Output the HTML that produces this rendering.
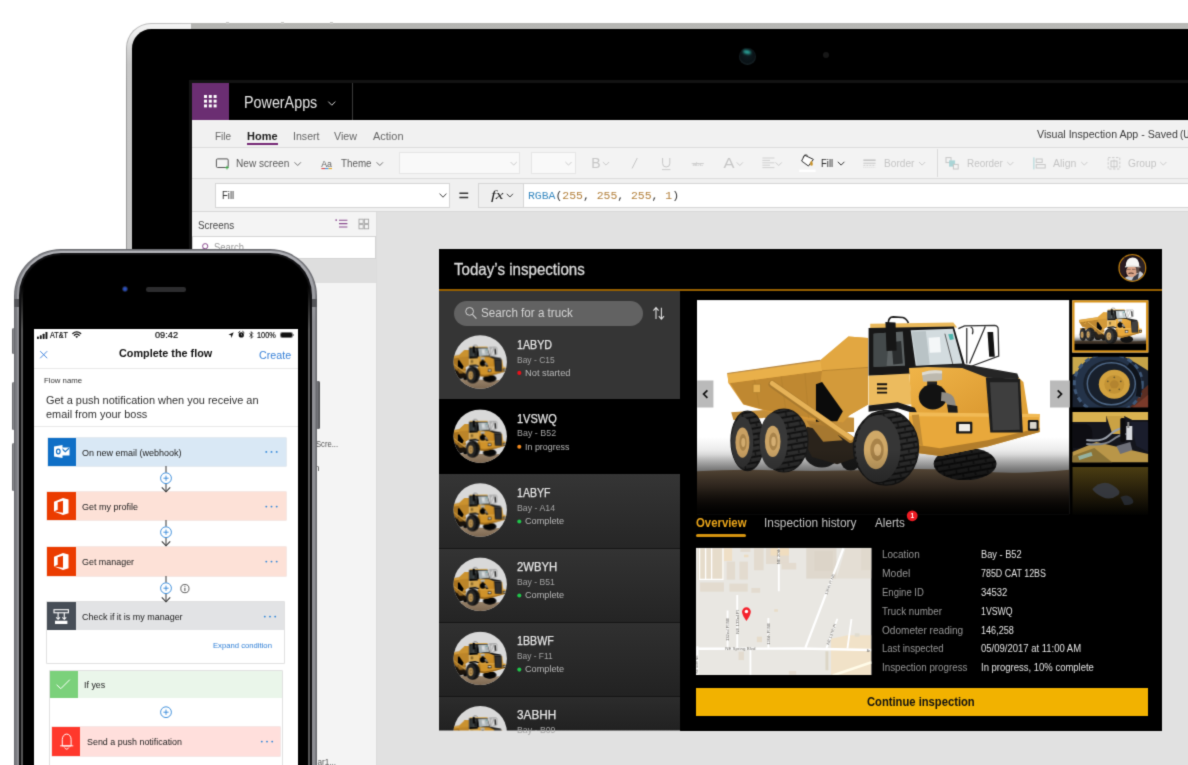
<!DOCTYPE html>
<html lang="en">
<head>
<meta charset="utf-8">
<title>PowerApps and Flow on tablet and phone</title>
<style>
html,body{margin:0;padding:0}
body{width:1188px;height:765px;overflow:hidden;background:#fff;position:relative;font-family:"Liberation Sans",sans-serif;}
#wrap{position:absolute;left:0;top:0;width:1400px;height:960px;background:#fff;filter:url(#soft)}
.a{position:absolute}
.t{position:absolute;white-space:nowrap;line-height:1;transform-origin:0 50%}
.mono{font-family:"Liberation Mono",monospace}
svg{position:absolute;overflow:visible}
svg svg{position:static;overflow:hidden}
</style>
</head>
<body>
<svg width="0" height="0" style="left:0;top:0"><filter id="soft" x="0" y="0" width="100%" height="100%" color-interpolation-filters="sRGB"><feConvolveMatrix order="3" kernelMatrix="0.0196 0.1008 0.0196 0.1008 0.5184 0.1008 0.0196 0.1008 0.0196" edgeMode="duplicate" preserveAlpha="true"/></filter></svg>
<div id="wrap">
<!-- ================= TABLET ================= -->
<div class="a" style="left:125.700px;top:23.100px;width:1100px;height:800px;border-radius:25px 0 0 0;background:linear-gradient(90deg,#a9a9a9 0,#b9b9b9 3px,#c4c4c4 65px,#b4b4b1 65.500px,#b9b9b6 100%)"></div>
<div class="a" style="left:126.500px;top:24px;width:64.500px;height:800px;border-radius:24.200px 0 0 0;background:linear-gradient(180deg,#f4f4f4 0,#ececec 10px,#d2d2d2 26px,#c6c6c6 40px,#c0c0c0 100%)"></div>
<div class="a" style="left:125.700px;top:50px;width:1.200px;height:760px;background:linear-gradient(180deg,rgba(140,140,140,0),#9a9a9a 40px)"></div>
<div class="a" style="left:226px;top:22px;width:3px;height:1.500px;background:#c9c9c7"></div><div class="a" style="left:280.500px;top:22px;width:3px;height:1.500px;background:#c9c9c7"></div><div class="a" style="left:330px;top:22px;width:3px;height:1.500px;background:#c9c9c7"></div>
<div class="a" style="left:131.500px;top:29px;width:1100px;height:800px;border-radius:19.500px 0 0 0;background:#000"></div>
<!-- camera -->
<div class="a" style="left:738.5px;top:47.5px;width:17px;height:17px;border-radius:50%;background:radial-gradient(circle at 50% 45%,#0d1a1f 0,#0a1216 55%,#1d2a2e 80%,#0a0d0e 100%)"></div>
<div class="a" style="left:743px;top:50px;width:8px;height:4px;border-radius:50%;background:#2aa198;filter:blur(.8px);transform:rotate(12deg)"></div>
<div class="a" style="left:822.5px;top:52px;width:6px;height:6px;border-radius:50%;background:#171717"></div>
<!-- screen border -->
<div class="a" style="left:189px;top:79.5px;width:1010px;height:700px;background:#131313"></div>
<!-- screen -->
<div class="a" style="left:192px;top:82.5px;width:1000px;height:690px;background:#e1e1e1"></div>
<!-- header -->
<div class="a" style="left:192px;top:82.5px;width:1000px;height:37px;background:#000"></div>
<div class="a" style="left:192px;top:82.5px;width:36.700px;height:37px;background:#6b2e72"></div>
<svg style="left:203.8px;top:94.8px" width="13" height="13" viewBox="0 0 13 13"><g fill="#fff"><rect x="0" y="0" width="3" height="3"/><rect x="4.8" y="0" width="3" height="3"/><rect x="9.6" y="0" width="3" height="3"/><rect x="0" y="4.7" width="3" height="3"/><rect x="4.8" y="4.7" width="3" height="3"/><rect x="9.6" y="4.7" width="3" height="3"/><rect x="0" y="9.4" width="3" height="3"/><rect x="4.8" y="9.4" width="3" height="3"/><rect x="9.6" y="9.4" width="3" height="3"/></g></svg>
<div class="a" style="left:351.500px;top:82.500px;width:1px;height:37px;background:#3a3a3a"></div>
<!-- ribbon -->
<div class="a" style="left:192px;top:119.500px;width:1000px;height:28px;background:#f1f1f1"></div>
<div class="a" style="left:192px;top:147px;width:1000px;height:1px;background:#dcdcdc"></div>
<div class="a" style="left:192px;top:148px;width:1000px;height:30px;background:#f3f3f3"></div>
<div class="a" style="left:192px;top:178px;width:1000px;height:1px;background:#dcdcdc"></div>
<div class="a" style="left:192px;top:179px;width:1000px;height:32px;background:#f0f0f0"></div>
<div class="a" style="left:192px;top:211px;width:1000px;height:1px;background:#d8d8d8"></div>
<!-- Home underline -->
<div class="a" style="left:247px;top:143px;width:30.5px;height:2px;background:#742774"></div>
<!-- toolbar dropdown boxes -->
<div class="a" style="left:398.5px;top:152px;width:121px;height:21.5px;background:#f9f9f9;border:1px solid #e6e6e6;box-sizing:border-box"></div>
<div class="a" style="left:530.5px;top:152px;width:45px;height:21.5px;background:#f9f9f9;border:1px solid #e6e6e6;box-sizing:border-box"></div>
<div class="a" style="left:936.5px;top:149px;width:1px;height:28px;background:#dadada"></div>
<!-- formula bar -->
<div class="a" style="left:214.5px;top:183px;width:235.5px;height:24.5px;background:#fff;border:1px solid #d6d6d6;box-sizing:border-box"></div>
<div class="a" style="left:478px;top:183px;width:720px;height:24.5px;background:#fff;border:1px solid #d6d6d6;box-sizing:border-box"></div>
<div class="a" style="left:479px;top:184px;width:45px;height:22.5px;background:#efefef;border-right:1px solid #d6d6d6;box-sizing:border-box"></div>
<!-- screens panel -->
<div class="a" style="left:192px;top:212px;width:184px;height:570px;background:#f4f4f4"></div>
<div class="a" style="left:192px;top:236px;width:184px;height:22.5px;background:#fff;border:1px solid #d4d4d4;box-sizing:border-box"></div>
<div class="a" style="left:192px;top:258.5px;width:184px;height:24.5px;background:#dedede"></div>
<div class="a" style="left:376px;top:212px;width:1px;height:570px;background:#dcdcdc"></div>
<!-- ================= SHARED SVG DEFS (truck illustration) ================= -->
<svg width="0" height="0" style="left:0;top:0">
<defs>
<linearGradient id="gSky" x1="0" y1="0" x2="0" y2="1"><stop offset="0" stop-color="#fff"/><stop offset=".64" stop-color="#fff"/><stop offset=".72" stop-color="#e4e4e4"/><stop offset=".80" stop-color="#8a8a8a"/></linearGradient>
<linearGradient id="gGround" x1="0" y1="0" x2="0" y2="1"><stop offset="0" stop-color="#64533f"/><stop offset=".3" stop-color="#4b3d30"/><stop offset=".75" stop-color="#221a13"/><stop offset="1" stop-color="#0a0806"/></linearGradient>
<linearGradient id="gBody" x1="0" y1="0" x2="0" y2="1"><stop offset="0" stop-color="#e8ae48"/><stop offset="1" stop-color="#d59535"/></linearGradient>
<linearGradient id="gHood" x1="0" y1="0" x2="1" y2="1"><stop offset="0" stop-color="#f0b549"/><stop offset="1" stop-color="#dc9a31"/></linearGradient>
<pattern id="pMesh" width="7" height="7" patternUnits="userSpaceOnUse"><rect width="7" height="7" fill="#4d4d4d"/><path d="M0 0L7 7M7 0L0 7" stroke="#2b2b2b" stroke-width="1.6"/></pattern>
<pattern id="pTread" width="44" height="40" patternUnits="userSpaceOnUse" patternTransform="rotate(-10)"><rect width="44" height="40" fill="#2e2e2e"/><path d="M0 6H44M0 26H44" stroke="#0f0f0f" stroke-width="7"/><path d="M22 6V26" stroke="#141414" stroke-width="5"/><path d="M0 26V46M44 26V46" stroke="#141414" stroke-width="5"/></pattern>
<symbol id="truckBody" viewBox="0 0 373 214.500" overflow="visible" preserveAspectRatio="none">
 <!-- left half drawn in 3.56x coords -->
 <g transform="scale(.2809)">
  <!-- far side tyres -->
  <ellipse cx="445" cy="545" rx="62" ry="52" fill="#1d1d1d"/><ellipse cx="430" cy="540" rx="20" ry="22" fill="#3a3126"/>
  <ellipse cx="548" cy="570" rx="36" ry="38" fill="#181818"/>
  <!-- frame -->
  <path d="M122 400L240 392L560 420L560 470L400 470L240 420L130 428Z" fill="#c48f3a"/>
  <path d="M390 430L470 440L540 500L430 500Z" fill="#b07d30"/>
  <path d="M392 452L470 470L560 500L575 560L500 585L410 560L380 500Z" fill="#2a231b"/>
  <path d="M400 440L475 452L520 500L450 505Z" fill="#a67830"/>
  <!-- dump body -->
  <path d="M108 262L440 215L540 130L610 135L610 372L545 410L520 436L390 426L250 396L165 372L112 296Z" fill="url(#gBody)"/>
  <path d="M118 296L446 252L432 424L250 394L166 371Z" fill="#bf8831"/>
  <path d="M446 252L610 240L610 372L545 410L520 436L432 424Z" fill="#d39a3a"/>
  <path d="M108 262L440 215L446 252L113 297Z" fill="#e9b04a"/>
  <path d="M440 215L540 130L610 135L610 240L446 252Z" fill="#e2a741"/>
  <path d="M108 262L440 215" stroke="#b98a45" stroke-width="4"/>
  <path d="M446 252L610 240M205 284L222 380M300 272L318 402M385 262L398 420" stroke="#b5822f" stroke-width="3" fill="none"/>
  <rect x="200" y="300" width="26" height="30" fill="#e3ad4d" stroke="#a87a2c" stroke-width="2"/>
  <!-- mudflap -->
  <path d="M424 300L446 292L520 396L500 432L424 434Z" fill="#0b0b0b"/>
  <!-- hoist cylinder -->
  <path d="M268 300L548 496" stroke="#a97a2e" stroke-width="26" stroke-linecap="round"/>
  <path d="M268 297L548 492" stroke="#e6b257" stroke-width="17" stroke-linecap="round"/>
  <!-- rear tyre 1 -->
  <ellipse cx="180" cy="502" rx="59" ry="106" fill="url(#pTread)"/>
  <ellipse cx="180" cy="502" rx="59" ry="106" fill="none" stroke="#1a1a1a" stroke-width="4"/>
  <ellipse cx="162" cy="506" rx="39" ry="90" fill="#353535"/>
  <ellipse cx="162" cy="508" rx="25" ry="54" fill="#c9a062"/><ellipse cx="164" cy="508" rx="13" ry="30" fill="#a8834a"/><ellipse cx="165" cy="508" rx="7" ry="16" fill="#d1ab6e"/>
  <!-- rear tyre 2 -->
  <ellipse cx="310" cy="501" rx="86" ry="112" fill="url(#pTread)"/>
  <ellipse cx="310" cy="501" rx="86" ry="112" fill="none" stroke="#1a1a1a" stroke-width="4"/>
  <ellipse cx="273" cy="503" rx="50" ry="100" fill="#383838"/>
  <ellipse cx="270" cy="504" rx="28" ry="56" fill="#cba466"/><ellipse cx="272" cy="504" rx="15" ry="32" fill="#a8834a"/><ellipse cx="273" cy="504" rx="8" ry="17" fill="#d4ae72"/>
 </g>
 <!-- right half drawn in 3.56x coords with origin x=173 -->
 <g transform="translate(173 0) scale(.2809)">
  <!-- far front-right tyre -->
  <ellipse cx="340" cy="584" rx="112" ry="58" fill="url(#pTread)"/><ellipse cx="340" cy="584" rx="112" ry="58" fill="#000" opacity=".35"/>
  <!-- cab roof -->
  <path d="M2 84L298 80L312 98L2 102Z" fill="#e9b85a"/>
  <!-- cab frame -->
  <path d="M-4 100L300 94L340 232L160 244L138 268L-4 270Z" fill="#171717"/>
  <path d="M14 120L118 112L126 234L14 238Z" fill="#5d6364"/>
  <path d="M14 120L70 116L60 236L14 238Z" fill="#444a4b"/>
  <path d="M78 150L112 146L118 226L84 230Z" fill="#2a2d2e"/>
  <path d="M146 108L296 102L330 226L164 234Z" fill="#d3dcdf"/>
  <path d="M210 134L250 132L254 186L214 188Z" fill="#f4f7f8"/>
  <path d="M150 112L200 110L214 230L168 232Z" fill="#b9c3c6"/>
  <path d="M280 122L296 120L300 140L286 142Z" fill="#4fb5ad"/>
  <path d="M268 120L296 228" stroke="#444" stroke-width="3"/>
  <!-- left mirror -->
  <path d="M66 84Q66 60 84 60L118 62Q132 66 138 82" fill="none" stroke="#1c1c1c" stroke-width="6"/>
  <path d="M56 78L92 80L96 180L60 182Z" fill="#161616"/>
  <!-- right mirror -->
  <path d="M316 102L338 92L446 90Q458 92 458 104L460 200L362 236M346 100L346 226M412 94L356 226M360 96Q372 100 366 122" fill="none" stroke="#2e2e2e" stroke-width="4.500"/>
  <path d="M420 114L440 114L446 202L426 202Z" fill="#121212"/>
  <!-- lower cab panel -->
  <path d="M-4 270L140 262L152 372L-4 374Z" fill="#ecbb5e"/>
  <path d="M26 300H62M26 315H62M26 330H62" stroke="#15130f" stroke-width="7"/>
  <!-- hood -->
  <path d="M140 242L330 232L424 272L428 408L150 402Z" fill="url(#gHood)"/>
  <path d="M174 238L336 228L526 262L534 282L420 277L330 242Z" fill="#262626"/>
  <path d="M530 276L548 292L566 408L538 408Z" fill="#e0a238"/>
  <!-- air cleaner -->
  <path d="M186 258Q222 246 258 252L258 284Q222 294 190 290Z" fill="#bdb9ae"/>
  <path d="M186 258Q222 246 258 252L258 262Q222 258 187 268Z" fill="#dedbd2"/>
  <path d="M205 290H240V306H205Z" fill="#222"/>
  <ellipse cx="225" cy="345" rx="50" ry="45" fill="#121212"/>
  <path d="M256 328Q300 330 304 360L312 402L282 402L276 372Q270 358 254 360Z" fill="#8f8b84"/>
  <path d="M276 372L312 378L314 402L280 402Z" fill="#1b1b1b"/>
  <!-- fender -->
  <path d="M-4 376L100 364L160 384L172 408L100 386L-4 398Z" fill="#1a1a1a"/>
  <!-- bumper -->
  <path d="M140 400L606 406L606 470L420 522L252 556L176 546L140 482Z" fill="#e8a83b"/>
  <path d="M140 400L606 406L606 418L140 414Z" fill="#f1ba55"/>
  <path d="M176 546L252 556L420 522L606 470L606 455L420 500L250 528L160 515Z" fill="#b27d2b"/>
  <path d="M150 410L175 408L190 520L165 510Z" fill="#c28c34"/>
  <rect x="308" y="434" width="58" height="42" rx="4" fill="#191919"/><rect x="318" y="442" width="40" height="26" rx="3" fill="#efece6"/>
  <rect x="564" y="428" width="38" height="38" rx="4" fill="#191919"/><rect x="571" y="435" width="24" height="24" rx="3" fill="#d9d5cc"/>
  <!-- grille -->
  <path d="M414 276L536 280L546 472L430 472Z" fill="#1f1f1f"/>
  <path d="M429 293L528 293L535 462L439 465Z" fill="url(#pMesh)"/>
  <!-- front tyre -->
  <ellipse cx="58" cy="527" rx="116" ry="133" fill="url(#pTread)"/>
  <ellipse cx="58" cy="527" rx="116" ry="133" fill="none" stroke="#181818" stroke-width="5"/>
  <ellipse cx="30" cy="530" rx="80" ry="120" fill="#363636"/>
  <ellipse cx="22" cy="534" rx="43" ry="69" fill="#cfa867"/><ellipse cx="26" cy="534" rx="24" ry="40" fill="#a98349"/><ellipse cx="28" cy="534" rx="13" ry="22" fill="#d6b074"/>
 </g>
</symbol>
<symbol id="truck" viewBox="0 0 373 214.500" preserveAspectRatio="xMidYMid slice">
 <rect width="373" height="214.500" fill="url(#gSky)"/>
 <path d="M0 171.500Q40 169 80 170.500T180 170T280 171.500T373 170V214.500H0Z" fill="url(#gGround)"/>
 <use href="#truckBody" width="373" height="214.500"/>
 <rect y="150" width="373" height="64.500" fill="url(#gFade)"/>
</symbol>
<linearGradient id="gFade" x1="0" y1="0" x2="0" y2="1"><stop offset="0" stop-color="#000" stop-opacity="0"/><stop offset=".6" stop-color="#000" stop-opacity=".35"/><stop offset="1" stop-color="#000" stop-opacity=".9"/></linearGradient>
<clipPath id="cCirc"><circle cx="0" cy="0" r="26.700"/></clipPath>
<linearGradient id="gCGround" x1="0" y1="0" x2="0" y2="1"><stop offset="0" stop-color="#a08a70"/><stop offset="1" stop-color="#7b6650"/></linearGradient>
<symbol id="listThumb" viewBox="-27 -27 54 54" overflow="visible">
 <g clip-path="url(#cCirc)">
  <rect x="-27" y="-27" width="54" height="54" fill="#d9d9d9"/>
  <path d="M-27 17.500Q-10 16.500 5 18T27 15V27H-27Z" fill="url(#gCGround)"/>
  <use href="#truckBody" x="-47.700" y="-20.500" width="79.400" height="48.400" style="filter:brightness(.86) contrast(1.12)"/>
 </g>
</symbol>
</defs>
</svg>
<!-- ================= APP CANVAS ================= -->
<div class="a" id="app" style="left:438.5px;top:249px;width:723px;height:481.5px;background:#000;overflow:hidden">
  <!-- header gold line -->
  <div class="a" style="left:0;top:40px;width:723px;height:1.700px;background:#965f00"></div>
  <!-- list panel -->
  <div class="a" style="left:0;top:42px;width:241.600px;height:440px;background:#2a2a2a"></div>
  <div class="a" style="left:0;top:42px;width:241.600px;height:108px;background:#353535"></div>
  <div class="a" style="left:0;top:150px;width:241.600px;height:74.5px;background:#000"></div>
  <div class="a" style="left:0;top:224.5px;width:241.600px;height:74px;background:linear-gradient(180deg,#353535,#262626)"></div>
  <div class="a" style="left:0;top:298.5px;width:241.600px;height:1px;background:#151515"></div>
  <div class="a" style="left:0;top:299.5px;width:241.600px;height:73px;background:linear-gradient(180deg,#333,#242424)"></div>
  <div class="a" style="left:0;top:372.5px;width:241.600px;height:1px;background:#151515"></div>
  <div class="a" style="left:0;top:373.5px;width:241.600px;height:73px;background:linear-gradient(180deg,#303030,#222)"></div>
  <div class="a" style="left:0;top:446.5px;width:241.600px;height:1px;background:#151515"></div>
  <div class="a" style="left:0;top:447.5px;width:241.600px;height:40px;background:linear-gradient(180deg,#2c2c2c,#1f1f1f)"></div>
  <!-- search pill -->
  <div class="a" style="left:15.3px;top:51.5px;width:189.5px;height:25px;border-radius:12.500px;background:#626262"></div>
  <!-- main image placeholder -->
  <svg style="left:258.800px;top:51.200px" width="372.400" height="214.300" viewBox="0 0 373 214.500"><use href="#truck" width="373" height="214.500"/></svg>
  <!-- map placeholder -->
  <!-- button -->
  <div class="a" style="left:257.3px;top:439px;width:452px;height:28px;background:#f2b200"></div>
  <!-- overview underline -->
  <div class="a" style="left:257.5px;top:284.600px;width:49.500px;height:3.800px;border-radius:1.900px;background:#d4930f"></div>
</div>
<!-- tablet chrome icons -->
<svg style="left:0;top:0" width="1188" height="765" viewBox="0 0 1188 765">
<path d="M328.3 101.6l3.5 3.6l3.5 -3.6" fill="none" stroke="#d0d0d0" stroke-width="1"/>
<rect x="216.4" y="158.9" width="11.8" height="8.6" rx="1.2" fill="none" stroke="#555" stroke-width="1"/><path d="M225.2 167.6h3.6M227 165.8v3.6" stroke="#3aa845" stroke-width="1"/>
<path d="M294.5 162.3l3.2 3.2l3.2 -3.2" fill="none" stroke="#666" stroke-width="0.9"/>
<text x="321.2" y="167" style="font-family:'Liberation Sans',sans-serif" font-size="9.500" font-weight="400" fill="#5e5e5e" textLength="10.800" lengthAdjust="spacingAndGlyphs">Aa</text>
<path d="M321.4 168.6h3.6" stroke="#d83b3b" stroke-width="1"/><path d="M325 168.6h3.6" stroke="#3a8ad8" stroke-width="1"/><path d="M328.6 168.6h3.4" stroke="#e8a313" stroke-width="1"/>
<path d="M376.6 162.3l3.2 3.2l3.2 -3.2" fill="none" stroke="#666" stroke-width="0.9"/>
<path d="M510.6 162.0l3.1 3.1l3.1 -3.1" fill="none" stroke="#c6c6c6" stroke-width="0.9"/>
<path d="M565.4 162.0l3.1 3.1l3.1 -3.1" fill="none" stroke="#c6c6c6" stroke-width="0.9"/>
<text x="591.2" y="168.3" style="font-family:'Liberation Sans',sans-serif" font-size="14" fill="#c6c6c6">B</text>
<path d="M602.9 162.0l3.1 3.1l3.1 -3.1" fill="none" stroke="#c6c6c6" stroke-width="0.9"/>
<path d="M637.3 158L632.1 168.4" stroke="#c6c6c6" stroke-width="1"/>
<path d="M662.6 158v5.4a3.6 3.6 0 0 0 7.2 0V158" fill="none" stroke="#c6c6c6" stroke-width="1"/><path d="M662 169.6h8.4" stroke="#c6c6c6" stroke-width=".9"/>
<text x="692.4" y="165.6" style="font-family:'Liberation Sans',sans-serif" font-size="6" fill="#c6c6c6" textLength="10.6" lengthAdjust="spacingAndGlyphs">abc</text><path d="M691.6 163.6h12.4" stroke="#c6c6c6" stroke-width=".7"/>
<text x="723.6" y="168.4" style="font-family:'Liberation Sans',sans-serif" font-size="15" fill="#c6c6c6" textLength="11" lengthAdjust="spacingAndGlyphs">A</text>
<path d="M736.7 162.4l3.1 3.1l3.1 -3.1" fill="none" stroke="#c6c6c6" stroke-width="0.9"/>
<path d="M762.4 158h12M762.4 160.4h7.6M762.4 162.8h12M762.4 165.2h7.6M762.4 167.6h12" stroke="#c6c6c6" stroke-width=".8"/>
<path d="M775.6 162.4l3.1 3.1l3.1 -3.1" fill="none" stroke="#c6c6c6" stroke-width="0.9"/>
<path d="M804.6 155.2l-3 5.8l6.8 5l5-6.6z" fill="#fff" stroke="#333" stroke-width="1" stroke-linejoin="round"/><path d="M803.2 157.8q1-4.2 4.4-2.400" fill="none" stroke="#333" stroke-width=".9"/><path d="M811.2 160.200q2.400 3 1.200 5.400q-2.400.6-2.400-2.400z" fill="#c8922a"/><rect x="799.2" y="169.6" width="16.4" height="2.400" fill="#fff"/>
<path d="M837.8 161.8l3.3 3.3l3.3 -3.3" fill="none" stroke="#333" stroke-width="1"/>
<path d="M863.4 160.200h12.200" stroke="#c6c6c6" stroke-width="1.600"/><path d="M863.4 163.200h12.200" stroke="#c6c6c6" stroke-width="1"/><path d="M863.4 165.4h12.200" stroke="#c6c6c6" stroke-width=".8" stroke-dasharray="2 1"/><path d="M863.4 167.4h12.200" stroke="#c6c6c6" stroke-width=".6" stroke-dasharray="1 1"/>
<path d="M919.0 162.0l3.1 3.1l3.1 -3.1" fill="none" stroke="#c6c6c6" stroke-width="0.9"/>
<rect x="946" y="157.600" width="5" height="5" fill="none" stroke="#c6c6c6" stroke-width="1"/><rect x="949.4" y="160.800" width="5.400" height="5.400" fill="#a9d4d6" stroke="#a9d4d6" stroke-width=".6"/><rect x="953.4" y="164.400" width="4.800" height="4.600" fill="#f3f3f3" stroke="#c6c6c6" stroke-width="1"/>
<path d="M1007.2 162.0l3.1 3.1l3.1 -3.1" fill="none" stroke="#c6c6c6" stroke-width="0.9"/>
<path d="M1033.900 157.400v12" stroke="#a9d4d6" stroke-width="1"/><rect x="1036.200" y="159" width="6" height="3.400" fill="none" stroke="#c6c6c6" stroke-width="1"/><rect x="1036.200" y="164.600" width="9" height="3.400" fill="none" stroke="#c6c6c6" stroke-width="1"/>
<path d="M1081.2 162.0l3.1 3.1l3.1 -3.1" fill="none" stroke="#c6c6c6" stroke-width="0.9"/>
<rect x="1108.200" y="157.600" width="11.600" height="11.400" fill="none" stroke="#c6c6c6" stroke-width=".9" stroke-dasharray="2.400 1.500"/><rect x="1111" y="161" width="6" height="5.800" fill="none" stroke="#c6c6c6" stroke-width="1"/><path d="M1114 159.400v9" stroke="#c6c6c6" stroke-width=".8"/>
<path d="M1160.2 162.0l3.1 3.1l3.1 -3.1" fill="none" stroke="#c6c6c6" stroke-width="0.9"/>
<path d="M439.6 193.6l3.4 3.6l3.4 -3.6" fill="none" stroke="#444" stroke-width="1"/>
<path d="M459.400 193.200h8.800M459.400 197.400h8.800" stroke="#333" stroke-width="1.500"/>
<text x="491" y="199.400" style="font-family:'Liberation Serif',serif" font-style="italic" font-size="13.500" fill="#222" textLength="12.600" lengthAdjust="spacingAndGlyphs">fx</text>
<path d="M506.8 193.8l3.1 3.2l3.1 -3.2" fill="none" stroke="#444" stroke-width="1"/>
<path d="M339 220.200h8.400M339 223.600h8.400M339 227h8.400" stroke="#8a4a8f" stroke-width="1.100"/><rect x="335.400" y="219.400" width="1.600" height="1.400" fill="#8a4a8f"/>
<g fill="none" stroke="#a4a4a4" stroke-width=".9"><rect x="359" y="219.200" width="4.200" height="4.200"/><rect x="364.400" y="219.200" width="4.200" height="4.200"/><rect x="359" y="224.600" width="4.200" height="4.200"/><rect x="364.400" y="224.600" width="4.200" height="4.200"/></g>
<circle cx="205.200" cy="246.200" r="2.600" fill="none" stroke="#8a4a8f" stroke-width="1"/><path d="M203.400 248.200l-2 2.400" stroke="#8a4a8f" stroke-width="1"/>
</svg>
<span class="t mono" style="left:528px;top:189.600px;font-size:11.450px;color:#333"><span style="color:#3b8bc2">RGBA</span>(<span style="color:#b3803c">255</span>, <span style="color:#b3803c">255</span>, <span style="color:#b3803c">255</span>, <span style="color:#b3803c">1</span>)</span>
<!-- app graphics (body coordinates) -->
<svg style="left:0;top:0" width="1188" height="765" viewBox="0 0 1188 765">
<use href="#listThumb" x="453.2" y="335.0" width="54" height="54"/>
<use href="#listThumb" x="453.2" y="409.2" width="54" height="54"/>
<use href="#listThumb" x="453.2" y="483.0" width="54" height="54"/>
<use href="#listThumb" x="453.2" y="557.3" width="54" height="54"/>
<use href="#listThumb" x="453.2" y="631.4" width="54" height="54"/>
<use href="#listThumb" x="453.2" y="705.6" width="54" height="54"/>
<rect x="438.500" y="730.500" width="241.600" height="34.500" fill="#e1e1e1"/>
<circle cx="469.600" cy="311.400" r="3.900" fill="none" stroke="#d0d0d0" stroke-width="1"/><path d="M472.400 314.400l4 4.200" stroke="#d0d0d0" stroke-width="1.100"/>
<g fill="none" stroke="#e2e2e2" stroke-width="1.050"><path d="M656 319v-11.200M653.400 310.600l2.600-3l2.600 3"/><path d="M661.400 307.800v11.200M658.800 316.200l2.600 3l2.600-3"/></g>
<circle cx="519.300" cy="372.9" r="2.050" fill="#e8111a"/>
<circle cx="519.300" cy="446.7" r="2.050" fill="#f28a1e"/>
<circle cx="519.300" cy="521.5" r="2.050" fill="#1fc64a"/>
<circle cx="519.300" cy="595.5" r="2.050" fill="#1fc64a"/>
<circle cx="519.300" cy="669.6" r="2.050" fill="#1fc64a"/>
<rect x="697.200" y="380.500" width="16.200" height="27" fill="#b4b4b4" opacity=".92"/><path d="M707.400 390.400l-3.800 3.700l3.800 3.700" fill="none" stroke="#111" stroke-width="1.700"/>
<rect x="1050" y="380.500" width="20" height="27" fill="#b4b4b4" opacity=".92"/><path d="M1057.700 390.400l3.800 3.700l-3.800 3.700" fill="none" stroke="#111" stroke-width="1.700"/>
<circle cx="912.200" cy="515.800" r="5.400" fill="#ee1c24"/>
<svg x="695.900" y="547.700" width="175.700" height="127.400" viewBox="32 42 960 696" preserveAspectRatio="none">
<rect x="32" y="42" width="960" height="696" fill="#e9e7e2"/>
<g fill="#e3dbcf">
<rect x="45" y="45" width="140" height="170" fill="#e6dccb"/>
<rect x="200" y="118" width="46" height="98"/><rect x="270" y="118" width="46" height="98"/>
<rect x="55" y="232" width="130" height="50"/><rect x="215" y="238" width="100" height="44"/><rect x="335" y="262" width="48" height="26"/>
<rect x="185" y="45" width="45" height="70" fill="#efdfc6"/><rect x="275" y="45" width="55" height="20"/><rect x="295" y="80" width="24" height="14" fill="#ecdcc2"/>
<rect x="350" y="45" width="52" height="120"/><rect x="415" y="45" width="125" height="86"/><rect x="440" y="45" width="100" height="40" fill="#f0ddbf"/><rect x="500" y="125" width="80" height="36"/>
<rect x="635" y="45" width="165" height="166" fill="#dfd8cd"/><rect x="680" y="60" width="100" height="110" fill="#dcd4c8"/>
<path d="M850 45H990V210H800Z" fill="#e4ded4"/><rect x="935" y="45" width="55" height="120" fill="#e0d9cd"/>
<path d="M770 540L860 520L990 520V738H770Z" fill="#f1e2c8"/>
<rect x="265" y="610" width="30" height="46"/><rect x="365" y="528" width="28" height="30" fill="#e6dccb"/><rect x="460" y="378" width="20" height="14" fill="#e8dcc8"/><rect x="740" y="608" width="16" height="104" fill="#dcd6c6"/><rect x="900" y="510" width="26" height="18" fill="#e0dccf"/><rect x="540" y="716" width="40" height="20"/>
</g>
<g fill="none" stroke="#fff">
<path d="M52 45V215H180V45M85 45V215M118 45V215" stroke-width="7"/>
<path d="M32 594L600 593L990 601" stroke-width="13"/>
<path d="M205 385V592M258 300V592M428 426V592M330 598V738M485 45V280" stroke-width="10"/>
<path d="M838 45L630 590" stroke-width="12"/><path d="M805 430L745 592M882 432L860 592" stroke-width="10"/>
<path d="M780 740L992 668" stroke-width="14" stroke="#fffbe8"/><path d="M40 580V738" stroke-width="12"/>
</g>
<g style="font-family:'Liberation Sans',sans-serif" font-size="19" fill="#6e6b66">
<text x="192" y="600" textLength="165" lengthAdjust="spacingAndGlyphs">NE Spring Blvd</text>
<text transform="translate(212 552) rotate(-90)" textLength="128" lengthAdjust="spacingAndGlyphs">132nd Pl NE</text>
<text transform="translate(265 512) rotate(-90)" textLength="128" lengthAdjust="spacingAndGlyphs">NE 133rd Pl</text>
<text transform="translate(435 572) rotate(-90)" textLength="120" lengthAdjust="spacingAndGlyphs">136th Pl NE</text>
<text transform="translate(492 132) rotate(-90)" textLength="84" lengthAdjust="spacingAndGlyphs">NE 20th</text>
<text transform="translate(748 300) rotate(-69)" textLength="120" lengthAdjust="spacingAndGlyphs">136th Pl NE</text>
<text transform="translate(758 574) rotate(-70)" textLength="120" lengthAdjust="spacingAndGlyphs">NE 137th Pl</text>
<text transform="translate(46 730) rotate(-90)" textLength="100" lengthAdjust="spacingAndGlyphs">NE 40th NE</text>
<text x="966" y="610" font-size="18">Ar</text>
</g>
<path d="M308 442Q284 410 284 392A24 24 0 0 1 332 392Q332 410 308 442Z" fill="#f5222d"/><circle cx="308" cy="391" r="9.500" fill="#fff"/>
</svg>
<rect x="1072.300" y="300.300" width="76" height="52.200" fill="#fff"/>
<svg x="1073" y="304.500" width="74.600" height="45.500" viewBox="0 0 373 214.500" preserveAspectRatio="none"><use href="#truck" width="373" height="214.500"/></svg>
<rect x="1073" y="344" width="74.600" height="8" fill="#000"/>
<rect x="1073.400" y="301.400" width="73.800" height="50" fill="none" stroke="#d8931a" stroke-width="2.200"/>
<svg x="1072.300" y="356.800" width="76" height="50.800" viewBox="0 0 76 50.800"><rect width="76" height="50.800" fill="#1a2230"/>
<path d="M0 0H22L8 14L0 18Z" fill="#c9a84c"/><path d="M52 0H76V14Q64 6 52 0Z" fill="#c6a448"/>
<path d="M50 50.800L76 28V50.800Z" fill="#5b2e22"/><path d="M60 50.800L76 38V50.800Z" fill="#7a3a2a"/>
<ellipse cx="36" cy="27" rx="34" ry="30" fill="#243349"/>
<ellipse cx="36" cy="27" rx="34" ry="30" fill="none" stroke="#3f5878" stroke-width="3" stroke-dasharray="5 4"/>
<ellipse cx="38" cy="27" rx="27" ry="24" fill="#18202c"/>
<ellipse cx="39" cy="27" rx="24" ry="21" fill="none" stroke="#4d6685" stroke-width="1.500"/>
<ellipse cx="42" cy="27.500" rx="15.500" ry="14.500" fill="#d2a23f"/>
<ellipse cx="42" cy="27.500" rx="10" ry="9.400" fill="#c39335"/><ellipse cx="42" cy="27.500" rx="4.400" ry="4" fill="#b3842f"/>
<g fill="#6d5a2c"><circle cx="42" cy="20.500" r=".9"/><circle cx="48.500" cy="24.500" r=".9"/><circle cx="47" cy="32.500" r=".9"/><circle cx="37.500" cy="33.500" r=".9"/><circle cx="35.500" cy="24.500" r=".9"/></g>
<path d="M56 8Q70 18 66 40" fill="none" stroke="#0e131b" stroke-width="5"/></svg>
<svg x="1072.300" y="412" width="76" height="50.600" viewBox="0 0 76 50.600"><rect width="76" height="50.600" fill="#14151c"/>
<path d="M0 0H76V8H60L52 4H34V10H0Z" fill="#d9b250"/><path d="M34 4H52V22H40Z" fill="#caa244"/>
<path d="M0 12H14Q20 14 20 22V36H0Z" fill="#0d0d12"/>
<path d="M58 10H76V40L64 34Z" fill="#1a1d2c"/>
<path d="M0 40L24 30L76 42V50.600H0Z" fill="#b99648"/><path d="M0 44L22 36L40 50.600H0Z" fill="#8c7436"/>
<path d="M14 28Q30 30 36 24T50 16" fill="none" stroke="#9aa0aa" stroke-width="2"/><path d="M14 32Q32 34 40 28T54 22" fill="none" stroke="#7d838d" stroke-width="2"/>
<rect x="48" y="6" width="5" height="24" rx="1.500" fill="#0c0c0f"/><rect x="54" y="14" width="6" height="14" fill="#d8dadf"/><rect x="55" y="10" width="2" height="6" fill="#888"/>
<path d="M44 34L58 30L60 38L48 42Z" fill="#6d6f78"/><rect x="6" y="42" width="14" height="4" fill="#9cc" opacity=".7" transform="rotate(-18 13 44)"/></svg>
<svg x="1072.300" y="467" width="76" height="48" viewBox="0 0 76 48"><defs><linearGradient id="gT4" x1="0" y1="0" x2="0" y2="1"><stop offset="0" stop-color="#4b3d12"/><stop offset=".55" stop-color="#231c0a"/><stop offset="1" stop-color="#020201"/></linearGradient></defs>
<rect width="76" height="48" fill="url(#gT4)"/><path d="M20 22Q30 12 40 18T46 28Q38 34 30 30T20 22Z" fill="#3a3e4a" opacity=".8"/><path d="M48 30Q56 26 60 32T52 38Z" fill="#2c3340" opacity=".7"/></svg>
<g><circle cx="1132.350" cy="267.900" r="14" fill="#b5780f"/><circle cx="1132.350" cy="267.900" r="12.600" fill="#1c1219"/>
<clipPath id="cAv"><circle cx="1132.350" cy="267.900" r="12.600"/></clipPath><g clip-path="url(#cAv)">
<rect x="1120" y="256" width="5" height="26" fill="#2a1c22"/><rect x="1140" y="256" width="6" height="26" fill="#2b2226"/>
<path d="M1122 284Q1124 275 1131 276.500L1140 271Q1146 274 1146 284Z" fill="#c7cbd3"/><path d="M1130 284L1134 276L1139 273L1137 284Z" fill="#3a3d47"/>
<ellipse cx="1131.600" cy="271.300" rx="5.400" ry="6" fill="#d9a488"/><path d="M1136 267H1139.500V272Q1138 274 1136.500 273Z" fill="#5a4a44"/>
<path d="M1128.500 273.600Q1131 272.400 1133.600 273.600" stroke="#4a2f26" stroke-width="1.100" fill="none"/>
<path d="M1126.600 269.400h4M1132 269.400h3.600" stroke="#7a5a4c" stroke-width=".8"/>
<path d="M1125.800 266.600Q1125.600 257.600 1132.400 257.400T1139.400 266.600Z" fill="#f6f6f4"/><path d="M1125 266.200Q1132.400 264.600 1140.400 266.600L1140.600 267.600Q1132.400 266 1125 267.400Z" fill="#dcdcd8"/>
</g></g>
</svg>
<!-- tablet + app texts -->
<span class="t" style="left:244.3px;top:94.1px;font-size:16.5px;font-weight:400;color:#e6e6e6;transform:scaleX(0.8686);">PowerApps</span>
<span class="t" style="left:215.4px;top:130.6px;font-size:11px;font-weight:400;color:#666;transform:scaleX(0.9078);">File</span>
<span class="t" style="left:247.0px;top:130.6px;font-size:11px;font-weight:700;color:#1e1e1e;transform:scaleX(0.9980);">Home</span>
<span class="t" style="left:292.5px;top:130.6px;font-size:11px;font-weight:400;color:#666;transform:scaleX(0.9631);">Insert</span>
<span class="t" style="left:334.0px;top:130.6px;font-size:11px;font-weight:400;color:#666;transform:scaleX(0.9723);">View</span>
<span class="t" style="left:372.5px;top:130.6px;font-size:11px;font-weight:400;color:#666;transform:scaleX(0.9974);">Action</span>
<span class="t" style="left:1036.7px;top:129.3px;font-size:10.5px;font-weight:400;color:#3a3a3a;transform:scaleX(1.0106);">Visual Inspection App - Saved</span>
<span class="t" style="left:1180.3px;top:129.3px;font-size:10.5px;font-weight:400;color:#3a3a3a;transform:scaleX(.92);">(Unsaved changes)</span>
<span class="t" style="left:236.0px;top:158.1px;font-size:11px;font-weight:400;color:#5a5a5a;transform:scaleX(0.9177);">New screen</span>
<span class="t" style="left:340.9px;top:158.1px;font-size:11px;font-weight:400;color:#5a5a5a;transform:scaleX(0.8905);">Theme</span>
<span class="t" style="left:821.2px;top:158.2px;font-size:10.5px;font-weight:400;color:#2b2b2b;transform:scaleX(0.9015);">Fill</span>
<span class="t" style="left:884.3px;top:158.2px;font-size:10.5px;font-weight:400;color:#c4c4c4;transform:scaleX(0.9646);">Border</span>
<span class="t" style="left:966.8px;top:158.2px;font-size:10.5px;font-weight:400;color:#c4c4c4;transform:scaleX(0.9463);">Reorder</span>
<span class="t" style="left:1053.3px;top:158.2px;font-size:10.5px;font-weight:400;color:#c4c4c4;transform:scaleX(1.0017);">Align</span>
<span class="t" style="left:1127.8px;top:158.2px;font-size:10.5px;font-weight:400;color:#c4c4c4;transform:scaleX(0.9730);">Group</span>
<span class="t" style="left:221.7px;top:190.3px;font-size:10.5px;font-weight:400;color:#333;transform:scaleX(0.9015);">Fill</span>
<span class="t" style="left:197.7px;top:219.5px;font-size:11px;font-weight:400;color:#444;transform:scaleX(0.8945);">Screens</span>
<span class="t" style="left:214.0px;top:242.6px;font-size:10px;font-weight:400;color:#9a9a9a;transform:scaleX(0.9467);">Search</span>
<span class="t" style="left:316.0px;top:438.9px;font-size:9.5px;font-weight:400;color:#555;transform:scaleX(0.8014);">Scre...</span>
<span class="t" style="left:314.2px;top:462.8px;font-size:9.5px;font-weight:400;color:#555;">n</span>
<span class="t" style="left:312.0px;top:757.4px;font-size:9.5px;font-weight:400;color:#555;transform:scaleX(0.8571);">Bar1...</span>
<span class="t" style="left:453.8px;top:262.2px;font-size:16px;font-weight:400;color:#dadada;transform:scaleX(0.9447);-webkit-text-stroke:.3px #dadada;">Today’s inspections</span>
<span class="t" style="left:481.0px;top:306.8px;font-size:12px;font-weight:400;color:#d4d4d4;transform:scaleX(0.9692);">Search for a truck</span>
<span class="t" style="left:695.8px;top:517.4px;font-size:12.5px;font-weight:700;color:#eaa51a;transform:scaleX(0.9084);">Overview</span>
<span class="t" style="left:764.2px;top:517.4px;font-size:12.5px;font-weight:400;color:#c2c2c2;transform:scaleX(0.9498);">Inspection history</span>
<span class="t" style="left:874.6px;top:517.4px;font-size:12.5px;font-weight:400;color:#c2c2c2;transform:scaleX(0.9357);">Alerts</span>
<span class="t" style="left:867.3px;top:696.4px;font-size:12px;font-weight:700;color:#111;transform:scaleX(0.9337);">Continue inspection</span>
<span class="t" style="left:910.4px;top:512.7px;font-size:6.5px;font-weight:700;color:#fff;">1</span>
<span class="t" style="left:516.7px;top:338.7px;font-size:12.2px;font-weight:400;color:#e6e6e6;transform:scaleX(0.8757);-webkit-text-stroke:.25px #e6e6e6;">1ABYD</span>
<span class="t" style="left:516.7px;top:354.5px;font-size:9.8px;font-weight:400;color:#a4a4a4;transform:scaleX(0.8654);">Bay - C15</span>
<span class="t" style="left:525.2px;top:368.8px;font-size:8.8px;font-weight:400;color:#b8b8b8;transform:scaleX(1.0574);">Not started</span>
<span class="t" style="left:516.7px;top:412.5px;font-size:12.2px;font-weight:400;color:#e6e6e6;transform:scaleX(0.9016);-webkit-text-stroke:.25px #e6e6e6;">1VSWQ</span>
<span class="t" style="left:516.7px;top:428.3px;font-size:9.8px;font-weight:400;color:#a4a4a4;transform:scaleX(0.9086);">Bay - B52</span>
<span class="t" style="left:525.2px;top:442.6px;font-size:8.8px;font-weight:400;color:#b8b8b8;transform:scaleX(1.0110);">In progress</span>
<span class="t" style="left:516.7px;top:487.3px;font-size:12.2px;font-weight:400;color:#e6e6e6;transform:scaleX(0.8673);-webkit-text-stroke:.25px #e6e6e6;">1ABYF</span>
<span class="t" style="left:516.7px;top:503.1px;font-size:9.8px;font-weight:400;color:#a4a4a4;transform:scaleX(0.8968);">Bay - A14</span>
<span class="t" style="left:525.2px;top:517.4px;font-size:8.8px;font-weight:400;color:#b8b8b8;transform:scaleX(1.0410);">Complete</span>
<span class="t" style="left:516.7px;top:561.0px;font-size:12.2px;font-weight:400;color:#e6e6e6;transform:scaleX(0.9298);-webkit-text-stroke:.25px #e6e6e6;">2WBYH</span>
<span class="t" style="left:516.7px;top:576.8px;font-size:9.8px;font-weight:400;color:#a4a4a4;transform:scaleX(0.8784);">Bay - B51</span>
<span class="t" style="left:525.2px;top:591.1px;font-size:8.8px;font-weight:400;color:#b8b8b8;transform:scaleX(1.0410);">Complete</span>
<span class="t" style="left:516.7px;top:635.0px;font-size:12.2px;font-weight:400;color:#e6e6e6;transform:scaleX(0.8741);-webkit-text-stroke:.25px #e6e6e6;">1BBWF</span>
<span class="t" style="left:516.7px;top:650.8px;font-size:9.8px;font-weight:400;color:#a4a4a4;transform:scaleX(0.8527);">Bay - F11</span>
<span class="t" style="left:525.2px;top:665.1px;font-size:8.8px;font-weight:400;color:#b8b8b8;transform:scaleX(1.0410);">Complete</span>
<span class="t" style="left:516.7px;top:709.2px;font-size:12.2px;font-weight:400;color:#e6e6e6;transform:scaleX(0.9646);-webkit-text-stroke:.25px #e6e6e6;">3ABHH</span>
<span class="t" style="left:516.7px;top:725.0px;font-size:9.8px;font-weight:400;color:#a4a4a4;transform:scaleX(0.8947);">Bay - B09</span>
<span class="t" style="left:881.8px;top:550.3px;font-size:10px;font-weight:400;color:#969696;transform:scaleX(0.9970);">Location</span>
<span class="t" style="left:980.6px;top:550.3px;font-size:10px;font-weight:400;color:#e4e4e4;transform:scaleX(0.9244);">Bay - B52</span>
<span class="t" style="left:881.8px;top:569.1px;font-size:10px;font-weight:400;color:#969696;transform:scaleX(1.0349);">Model</span>
<span class="t" style="left:980.6px;top:569.1px;font-size:10px;font-weight:400;color:#e4e4e4;transform:scaleX(0.8902);">785D CAT 12BS</span>
<span class="t" style="left:881.8px;top:587.9px;font-size:10px;font-weight:400;color:#969696;transform:scaleX(0.9540);">Engine ID</span>
<span class="t" style="left:980.6px;top:587.9px;font-size:10px;font-weight:400;color:#e4e4e4;transform:scaleX(0.9492);">34532</span>
<span class="t" style="left:881.8px;top:606.7px;font-size:10px;font-weight:400;color:#969696;transform:scaleX(0.9767);">Truck number</span>
<span class="t" style="left:980.6px;top:606.7px;font-size:10px;font-weight:400;color:#e4e4e4;transform:scaleX(0.8775);">1VSWQ</span>
<span class="t" style="left:881.8px;top:625.5px;font-size:10px;font-weight:400;color:#969696;transform:scaleX(1.0073);">Odometer reading</span>
<span class="t" style="left:980.6px;top:625.5px;font-size:10px;font-weight:400;color:#e4e4e4;transform:scaleX(0.9099);">146,258</span>
<span class="t" style="left:881.8px;top:644.3px;font-size:10px;font-weight:400;color:#969696;transform:scaleX(0.9550);">Last inspected</span>
<span class="t" style="left:980.6px;top:644.3px;font-size:10px;font-weight:400;color:#e4e4e4;transform:scaleX(0.9491);">05/09/2017 at 11:00 AM</span>
<span class="t" style="left:881.8px;top:663.1px;font-size:10px;font-weight:400;color:#969696;transform:scaleX(0.9796);">Inspection progress</span>
<span class="t" style="left:980.6px;top:663.1px;font-size:10px;font-weight:400;color:#e4e4e4;transform:scaleX(0.9491);">In progress, 10% complete</span>
<!-- ================= PHONE ================= -->
<!-- side buttons -->
<div class="a" style="left:11.600px;top:327.500px;width:3.400px;height:26px;border-radius:1.5px;background:linear-gradient(90deg,#5b5c60,#b4b5b8)"></div>
<div class="a" style="left:11.600px;top:382px;width:3.400px;height:48px;border-radius:1.5px;background:linear-gradient(90deg,#5b5c60,#b4b5b8)"></div>
<div class="a" style="left:11.600px;top:443px;width:3.400px;height:48px;border-radius:1.5px;background:linear-gradient(90deg,#5b5c60,#b4b5b8)"></div>
<div class="a" style="left:315.5px;top:381px;width:4px;height:48px;border-radius:1.5px;background:linear-gradient(90deg,#8b8c90,#4b4c50)"></div>
<!-- body -->
<div class="a" style="left:14px;top:248.6px;width:303.4px;height:600px;border-radius:47px 47px 0 0;background:#696a6f"></div>
<div class="a" style="left:15.3px;top:249.9px;width:300.8px;height:600px;border-radius:45.7px 45.7px 0 0;background:linear-gradient(180deg,#85868b 0,#7b7c81 60px)"></div>
<div class="a" style="left:16.8px;top:251.4px;width:297.8px;height:600px;border-radius:44.2px 44.2px 0 0;background:linear-gradient(180deg,#b3b4b9 0,#a2a3a8 30px,#8e8f94 70px)"></div>
<div class="a" style="left:19.3px;top:253.4px;width:292.8px;height:600px;border-radius:42.2px 42.2px 0 0;background:#111113"></div>
<div class="a" style="left:20.9px;top:255px;width:289.6px;height:600px;border-radius:40.6px 40.6px 0 0;background:linear-gradient(180deg,#000 0,#000 30px,#555 75px)"></div>
<div class="a" style="left:23.3px;top:255.6px;width:284.8px;height:600px;border-radius:39px 39px 0 0;background:#000"></div>
<!-- antenna bands -->
<div class="a" style="left:14px;top:298.5px;width:5px;height:8px;background:#55565a"></div>
<div class="a" style="left:312.4px;top:298.5px;width:5px;height:8px;background:#55565a"></div>
<!-- speaker + camera -->
<div class="a" style="left:145.5px;top:287px;width:40px;height:4.6px;border-radius:2.3px;background:#2c2c2e"></div>
<div class="a" style="left:121.5px;top:286.3px;width:6px;height:6px;border-radius:50%;background:radial-gradient(circle,#3560d0 0,#24409a 40%,#15171c 72%)"></div>
<!-- phone screen -->
<div class="a" style="left:34px;top:328.5px;width:264px;height:440px;background:#fff"></div>
<!-- status icons -->
<svg style="left:37px;top:331.700px" width="10.800" height="7" viewBox="0 0 11 7"><g fill="#111"><rect x="0" y="4.6" width="1.9" height="2.4" rx=".5"/><rect x="2.9" y="3.2" width="1.9" height="3.8" rx=".5"/><rect x="5.8" y="1.6" width="1.9" height="5.4" rx=".5"/><rect x="8.7" y="0" width="1.9" height="7" rx=".5"/></g></svg>
<svg style="left:72px;top:331.3px" width="9.5" height="7.4" viewBox="0 0 19 15"><g fill="none" stroke="#111" stroke-width="2.6" stroke-linecap="round"><path d="M1.5 5.2Q9.5 -1.6 17.5 5.2"/><path d="M4.6 8.6Q9.5 4.4 14.4 8.6"/></g><path d="M9.5 14.2L6.6 11.2Q9.5 8.8 12.4 11.2Z" fill="#111"/></svg>
<svg style="left:228.4px;top:331.8px" width="6" height="6.4" viewBox="0 0 12 13"><path d="M11.5 0.5L0.8 5.6L6 6.4L6.8 12Z" fill="#111"/></svg>
<svg style="left:237.8px;top:331.4px" width="6.6" height="7" viewBox="0 0 13 14"><circle cx="6.5" cy="7.8" r="5.2" fill="#111"/><path d="M1 3.2L3.6 1M12 3.2L9.4 1" stroke="#111" stroke-width="2" stroke-linecap="round"/><path d="M6.5 5v3l2 1.2" stroke="#fff" stroke-width="1" fill="none"/></svg>
<svg style="left:248.6px;top:331px" width="4.6" height="8" viewBox="0 0 9 16"><path d="M1 4.5L7.6 11.2L4.4 14.6V1.4L7.6 4.8L1 11.5" fill="none" stroke="#111" stroke-width="1.5" stroke-linejoin="round"/></svg>
<div class="a" style="left:279.6px;top:332.1px;width:13.4px;height:5.8px;border-radius:1.6px;border:.6px solid #777;box-sizing:border-box"></div>
<div class="a" style="left:280.6px;top:333.1px;width:11.4px;height:3.8px;border-radius:.8px;background:#111"></div>
<div class="a" style="left:293.4px;top:334px;width:.9px;height:2px;border-radius:0 1px 1px 0;background:#777"></div>
<!-- nav -->
<svg style="left:40.2px;top:351.3px" width="7.4" height="7.4" viewBox="0 0 10 10"><path d="M.6 .6L9.4 9.4M9.4 .6L.6 9.4" stroke="#3a7fdb" stroke-width="1.25" stroke-linecap="round"/></svg>
<div class="a" style="left:34px;top:368.3px;width:264px;height:.9px;background:#e9e9e9"></div>
<div class="a" style="left:34px;top:425.6px;width:264px;height:.9px;background:#e9e9e9"></div>
<!-- card 1 -->
<div class="a" style="left:47.5px;top:437.5px;width:238.4px;height:28.4px;background:#d9e8f5;box-shadow:0 0 0 .5px #c9d6e2"></div>
<div class="a" style="left:47.5px;top:437.5px;width:28.4px;height:28.4px;background:#0f6fc6"></div>
<svg style="left:53.5px;top:445.2px" width="16.5" height="13" viewBox="0 0 33 26"><path d="M14 5H31V21H14Z" fill="#fff"/><path d="M15 6.5L22.5 13.5L30 6.5" fill="none" stroke="#0f6fc6" stroke-width="2.2"/><path d="M0 3L17 0V26L0 23Z" fill="#fff"/><ellipse cx="8.6" cy="13" rx="3.6" ry="4.8" fill="none" stroke="#0f6fc6" stroke-width="2.4"/></svg>
<!-- card 2 -->
<div class="a" style="left:47.3px;top:492.3px;width:238.4px;height:28px;background:#fde1d7;box-shadow:0 0 0 .5px #ecd2c9"></div>
<div class="a" style="left:47.3px;top:492.3px;width:28.4px;height:28px;background:#eb3c00"></div>
<svg style="left:54.3px;top:497.8px" width="14.5" height="17" viewBox="0 0 29 34"><path d="M0 7.5L18 0L29 3.2V30.5L18 34L0 26.8L18 29.4V5.6L7.4 8.4V23.6L0 26.8Z" fill="#fff"/></svg>
<!-- card 3 -->
<div class="a" style="left:47.3px;top:547.4px;width:238.4px;height:28.3px;background:#fde1d7;box-shadow:0 0 0 .5px #ecd2c9"></div>
<div class="a" style="left:47.3px;top:547.4px;width:28.4px;height:28.3px;background:#eb3c00"></div>
<svg style="left:54.3px;top:553px" width="14.5" height="17" viewBox="0 0 29 34"><path d="M0 7.5L18 0L29 3.2V30.5L18 34L0 26.8L18 29.4V5.6L7.4 8.4V23.6L0 26.8Z" fill="#fff"/></svg>
<!-- card 4 -->
<div class="a" style="left:47.3px;top:602.2px;width:236.6px;height:61px;background:#fff;box-shadow:0 0 0 .7px #d5d5d5"></div>
<div class="a" style="left:47.3px;top:602.2px;width:236.6px;height:28.3px;background:#e2e3e5"></div>
<div class="a" style="left:47.3px;top:602.2px;width:28.4px;height:28.3px;background:#474e57"></div>
<svg style="left:53.3px;top:608.6px" width="16.4" height="15.6" viewBox="0 0 33 31"><g fill="none" stroke="#fff" stroke-width="2.2"><rect x="2" y="1.2" width="29" height="6.2"/><path d="M10.3 7.4V20M22.7 7.4V20"/><path d="M6.4 16.6L10.3 20.6L14.2 16.6M18.8 16.6L22.7 20.6L26.6 16.6"/></g><path d="M4 23.5H16.6V29.8H4ZM16.4 23.5H29V29.8H16.4Z" fill="#fff"/></svg>
<!-- if yes container -->
<div class="a" style="left:49.5px;top:670.7px;width:232.5px;height:130px;background:#fff;box-shadow:0 0 0 .7px #d5d5d5"></div>
<div class="a" style="left:49.5px;top:670.7px;width:232.5px;height:27.5px;background:#eaf6ea"></div>
<div class="a" style="left:49.5px;top:670.7px;width:28.4px;height:27.5px;background:#7bd17b"></div>
<svg style="left:56.4px;top:679.4px" width="14.4" height="10.4" viewBox="0 0 29 21"><path d="M1.2 11.6L9.6 19.6L27.8 1.4" fill="none" stroke="#fff" stroke-width="2"/></svg>
<!-- push card -->
<div class="a" style="left:52.1px;top:727.3px;width:228.3px;height:28.3px;background:#ffdfdc;box-shadow:0 0 0 .5px #ecd0cd"></div>
<div class="a" style="left:52.1px;top:727.3px;width:28.4px;height:28.3px;background:#ff382c"></div>
<svg style="left:59.6px;top:732.6px" width="13.4" height="17.8" viewBox="0 0 27 36"><path d="M4.6 25.5V13.2C4.6 7 8.4 2.2 13.5 2.2S22.4 7 22.4 13.2V25.5ZM1 26H26" fill="none" stroke="#fff" stroke-width="2" stroke-linecap="round"/><path d="M9.2 29.5Q13.5 36 17.8 29.5" fill="none" stroke="#fff" stroke-width="2"/></svg>
<!-- connectors -->
<svg style="left:155.9px;top:465.9px" width="20" height="27" viewBox="0 0 20 27"><path d="M10 0V6.6M10 17.8V26" stroke="#333" stroke-width="1"/><path d="M5.8 21.4L10 25.8L14.2 21.4" fill="none" stroke="#333" stroke-width="1.1"/><circle cx="10" cy="12.2" r="5.4" fill="#fff" stroke="#2f86d8" stroke-width=".9"/><path d="M10 9.6V14.8M7.4 12.2H12.6" stroke="#2f86d8" stroke-width=".9"/></svg>
<svg style="left:155.9px;top:520.3px" width="20" height="27" viewBox="0 0 20 27"><path d="M10 0V6.6M10 17.8V26" stroke="#333" stroke-width="1"/><path d="M5.8 21.4L10 25.8L14.2 21.4" fill="none" stroke="#333" stroke-width="1.1"/><circle cx="10" cy="12.2" r="5.4" fill="#fff" stroke="#2f86d8" stroke-width=".9"/><path d="M10 9.6V14.8M7.4 12.2H12.6" stroke="#2f86d8" stroke-width=".9"/></svg>
<svg style="left:155.9px;top:575.7px" width="34" height="27" viewBox="0 0 34 27"><path d="M10 0V6.6M10 17.8V26" stroke="#333" stroke-width="1"/><path d="M5.8 21.4L10 25.8L14.2 21.4" fill="none" stroke="#333" stroke-width="1.1"/><circle cx="10" cy="12.2" r="5.4" fill="#fff" stroke="#2f86d8" stroke-width=".9"/><path d="M10 9.6V14.8M7.4 12.2H12.6" stroke="#2f86d8" stroke-width=".9"/><circle cx="28.9" cy="12.6" r="4.1" fill="#fff" stroke="#333" stroke-width=".8"/><path d="M28.9 11.8V15" stroke="#333" stroke-width=".9"/><circle cx="28.9" cy="10.3" r=".55" fill="#333"/></svg>
<svg style="left:155.9px;top:699.5px" width="20" height="24" viewBox="0 0 20 24"><circle cx="10" cy="12.2" r="5.4" fill="#fff" stroke="#2f86d8" stroke-width=".9"/><path d="M10 9.6V14.8M7.4 12.2H12.6" stroke="#2f86d8" stroke-width=".9"/></svg>
<!-- ellipsis dots -->
<svg style="left:0;top:0" width="300" height="765" viewBox="0 0 300 765"><g fill="#2f86d8"><circle cx="266.3" cy="451.9" r=".95"/><circle cx="271.5" cy="451.9" r=".95"/><circle cx="276.7" cy="451.9" r=".95"/><circle cx="266.3" cy="506.6" r=".95"/><circle cx="271.5" cy="506.6" r=".95"/><circle cx="276.7" cy="506.6" r=".95"/><circle cx="266.3" cy="561.6" r=".95"/><circle cx="271.5" cy="561.6" r=".95"/><circle cx="276.7" cy="561.6" r=".95"/><circle cx="264.8" cy="616.6" r=".95"/><circle cx="270" cy="616.6" r=".95"/><circle cx="275.2" cy="616.6" r=".95"/><circle cx="261.8" cy="741.6" r=".95"/><circle cx="267" cy="741.6" r=".95"/><circle cx="272.2" cy="741.6" r=".95"/></g></svg>
<!-- phone texts -->
<span class="t" style="left:50.2px;top:330.9px;font-size:8.6px;font-weight:400;color:#111;transform:scaleX(0.8346);-webkit-text-stroke:.2px #111;">AT&amp;T</span>
<span class="t" style="left:155.3px;top:330.9px;font-size:8.6px;font-weight:400;color:#111;transform:scaleX(1.0690);-webkit-text-stroke:.2px #111;">09:42</span>
<span class="t" style="left:257.2px;top:330.9px;font-size:8.6px;font-weight:400;color:#111;transform:scaleX(0.8552);-webkit-text-stroke:.2px #111;">100%</span>
<span class="t" style="left:119.3px;top:348.1px;font-size:11.5px;font-weight:700;color:#111;transform:scaleX(0.9411);">Complete the flow</span>
<span class="t" style="left:259.3px;top:349.3px;font-size:11.7px;font-weight:400;color:#3a82d8;transform:scaleX(0.9175);">Create</span>
<span class="t" style="left:43.9px;top:376.8px;font-size:7.5px;font-weight:400;color:#333;transform:scaleX(1.0385);">Flow name</span>
<span class="t" style="left:46.2px;top:395.1px;font-size:11px;font-weight:400;color:#303030;transform:scaleX(0.9957);">Get a push notification when you receive an</span>
<span class="t" style="left:46.2px;top:408.5px;font-size:11px;font-weight:400;color:#303030;transform:scaleX(0.9922);">email from your boss</span>
<span class="t" style="left:82.2px;top:448.9px;font-size:9px;font-weight:400;color:#222;transform:scaleX(1.0005);">On new email (webhook)</span>
<span class="t" style="left:81.9px;top:503.3px;font-size:9px;font-weight:400;color:#222;transform:scaleX(0.9977);">Get my profile</span>
<span class="t" style="left:81.9px;top:558.1px;font-size:9px;font-weight:400;color:#222;transform:scaleX(0.9918);">Get manager</span>
<span class="t" style="left:81.9px;top:613.2px;font-size:9px;font-weight:400;color:#222;transform:scaleX(0.9957);">Check if it is my manager</span>
<span class="t" style="left:213.0px;top:642.1px;font-size:7.7px;font-weight:400;color:#2f7fd6;transform:scaleX(0.9986);">Expand condition</span>
<span class="t" style="left:83.8px;top:681.3px;font-size:9px;font-weight:400;color:#222;transform:scaleX(0.9853);">If yes</span>
<span class="t" style="left:86.8px;top:738.0px;font-size:9px;font-weight:400;color:#222;transform:scaleX(0.9888);">Send a push notification</span>
</div><!--wrap-->
</body>
</html>
